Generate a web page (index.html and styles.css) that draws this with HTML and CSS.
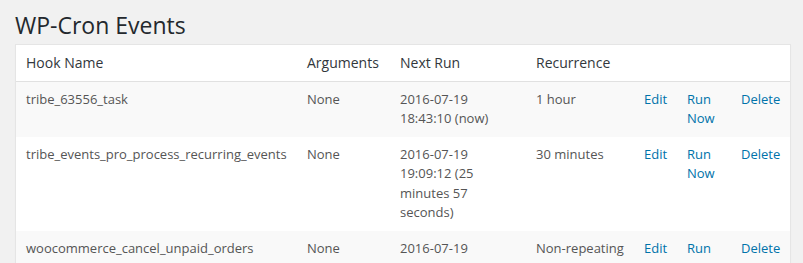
FILE: index.html
```html
<!DOCTYPE html>
<html>
<head>
<meta charset="utf-8">
<link rel="stylesheet" href="styles.css">
</head>
<body>
<div class="wrap">
  <h1 class="title">WP-Cron Events</h1>
  <table class="widefat">
    <colgroup>
      <col class="c-hook"><col class="c-args"><col class="c-next"><col class="c-rec"><col class="c-edit"><col class="c-run"><col class="c-del">
    </colgroup>
    <thead>
      <tr>
        <th>Hook Name</th>
        <th>Arguments</th>
        <th>Next Run</th>
        <th>Recurrence</th>
        <th></th>
        <th></th>
        <th></th>
      </tr>
    </thead>
    <tbody>
      <tr class="alt">
        <td>tribe_63556_task</td>
        <td>None</td>
        <td>2016-07-19 18:43:10 (now)</td>
        <td>1 hour</td>
        <td class="act"><a href="#">Edit</a></td>
        <td class="act"><a href="#">Run Now</a></td>
        <td class="act"><a href="#">Delete</a></td>
      </tr>
      <tr>
        <td>tribe_events_pro_process_recurring_events</td>
        <td>None</td>
        <td>2016-07-19 19:09:12 (25 minutes 57 seconds)</td>
        <td>30 minutes</td>
        <td class="act"><a href="#">Edit</a></td>
        <td class="act"><a href="#">Run Now</a></td>
        <td class="act"><a href="#">Delete</a></td>
      </tr>
      <tr class="alt">
        <td>woocommerce_cancel_unpaid_orders</td>
        <td>None</td>
        <td>2016-07-19 19:20:00 (36 minutes 45 seconds)</td>
        <td>Non-repeating</td>
        <td class="act"><a href="#">Edit</a></td>
        <td class="act"><a href="#">Run Now</a></td>
        <td class="act"><a href="#">Delete</a></td>
      </tr>
    </tbody>
  </table>
</div>
</body>
</html>
```
FILE: styles.css
```css
html, body {
  margin: 0;
  padding: 0;
  background: #f1f1f1;
  font-family: "Open Sans", "Liberation Sans", sans-serif;
  color: #444;
}

.wrap {
  padding: 2px 12px 0 15px;
}

.title {
  margin: 0;
  padding: 9px 0 4px 0;
  font-size: 23px;
  font-weight: 400;
  line-height: 29px;
  color: #23282d;
}

.widefat {
  width: 776px;
  table-layout: fixed;
  border-collapse: separate;
  border-spacing: 0;
  background: #fff;
  border: 1px solid #e5e5e5;
  box-shadow: 0 1px 1px rgba(0, 0, 0, 0.04);
}

.c-hook { width: 281px; }
.c-args { width: 93px; }
.c-next { width: 136px; }
.c-rec { width: 108px; }
.c-edit { width: 43px; }
.c-run { width: 54px; }
.c-del { width: 59px; }

.widefat th {
  text-align: left;
  font-weight: 400;
  font-size: 14px;
  line-height: 1.4em;
  padding: 8px 10px;
  color: #32373c;
  border-bottom: 1px solid #e1e1e1;
  vertical-align: top;
}

.widefat td {
  font-size: 13px;
  line-height: 1.5em;
  padding: 8px 10px;
  color: #555;
  vertical-align: top;
}

.widefat td.act {
  padding-right: 4px;
}

.widefat tr.alt td {
  background: #f9f9f9;
}

.widefat a {
  color: #0073aa;
  text-decoration: none;
}
```
